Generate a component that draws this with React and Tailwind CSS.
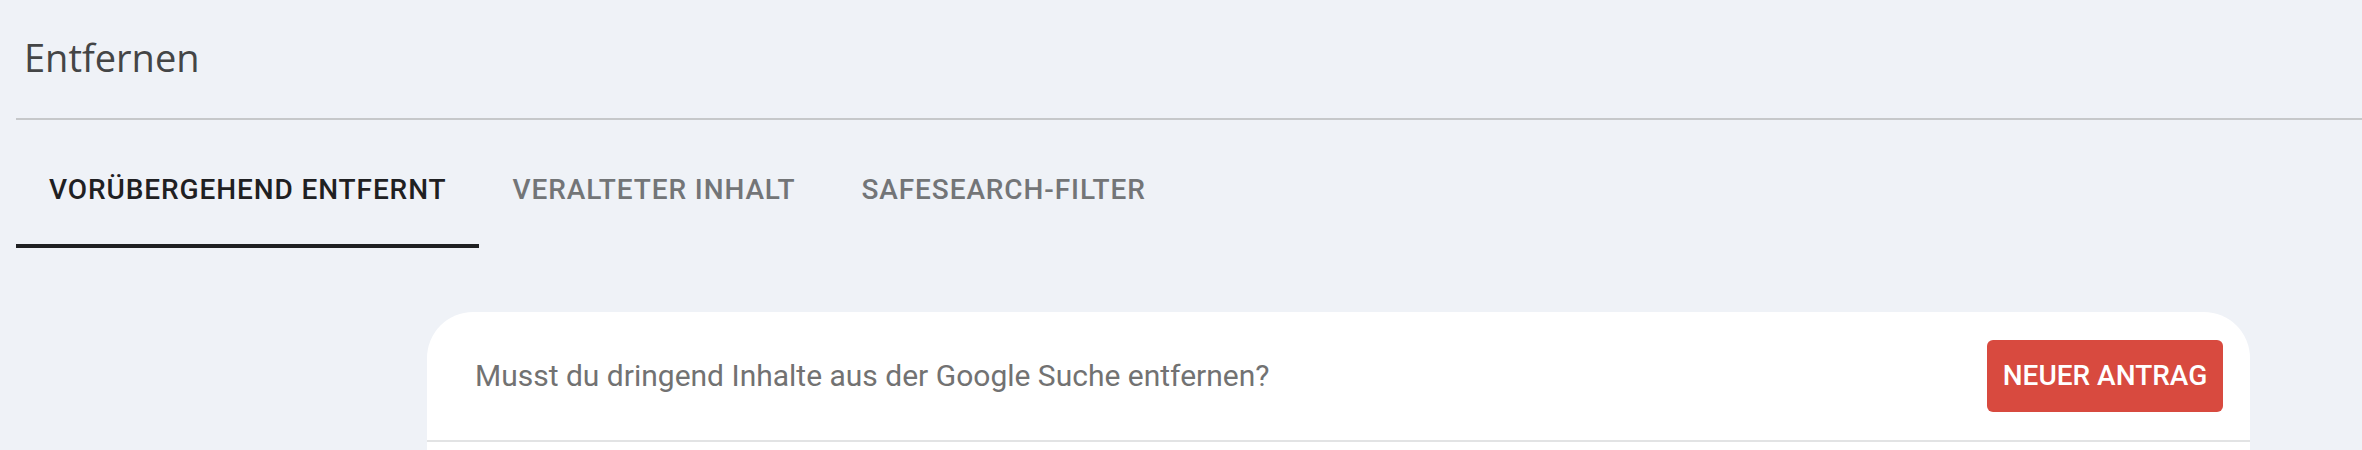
import React from 'react'

const tabs = [
  { label: 'VORÜBERGEHEND ENTFERNT', active: true },
  { label: 'VERALTETER INHALT', active: false },
  { label: 'SAFESEARCH-FILTER', active: false },
]

export default function App() {
  return (
    <div className="w-full h-[450px] overflow-hidden bg-[#eff2f7] font-['Roboto','Liberation_Sans',sans-serif]">
      {/* Page title */}
      <div className="pt-[31px] pl-[24px]">
        <h1 className="text-[38px] leading-[52px] font-normal text-[#444546] font-['Open_Sans','Liberation_Sans',sans-serif]">
          Entfernen
        </h1>
      </div>
      <div className="mt-[35px] ml-4 h-[2px] bg-[#c6c8ca]" />

      {/* Tabs */}
      <div className="ml-4 flex">
        {tabs.map((tab) => (
          <div
            key={tab.label}
            className={
              tab.active
                ? 'h-[128px] pt-[54px] px-[33px] border-b-4 border-[#1f2022] text-[#1f2022]'
                : 'h-[128px] pt-[54px] px-[33px] border-b-4 border-transparent text-[#737577]'
            }
          >
            <span className="block text-[28px] leading-[32px] font-medium tracking-[0.9px] whitespace-nowrap">
              {tab.label}
            </span>
          </div>
        ))}
      </div>

      {/* Card */}
      <div className="mt-[64px] ml-[427px] w-[1823px] bg-white rounded-t-[46px]">
        <div className="h-[130px] flex items-center justify-between pl-[48px] pr-[27px] border-b-2 border-[#e2e3e4]">
          <p className="text-[30px] leading-[36px] text-[#727272]">
            Musst du dringend Inhalte aus der Google Suche entfernen?
          </p>
          <button className="w-[236px] h-[72px] rounded-[6px] bg-[#d84a3f] text-white text-[28px] leading-[32px] font-medium">
            NEUER ANTRAG
          </button>
        </div>
        <div className="h-[200px]" />
      </div>
    </div>
  )
}
